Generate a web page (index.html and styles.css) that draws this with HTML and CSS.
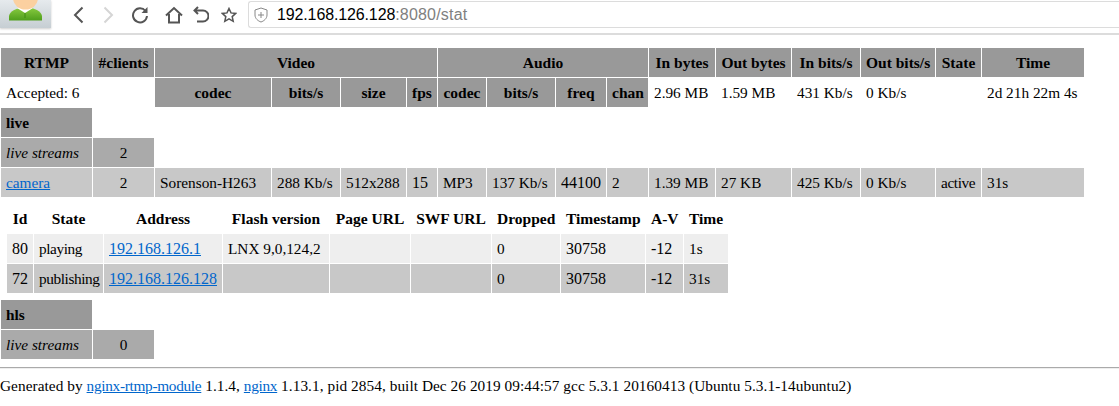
FILE: index.html
```html
<!DOCTYPE html>
<html lang="en">
<head>
<meta charset="utf-8">
<title>RTMP statistics</title>
<link rel="stylesheet" href="styles.css">
</head>
<body>
<header class="toolbar">
  <div class="avatar">
    <svg width="51" height="28" viewBox="0 0 51 28">
      <defs>
        <linearGradient id="bg" x1="0" y1="0" x2="0" y2="1"><stop offset="0" stop-color="#e6eaed"/><stop offset="1" stop-color="#c6ced3"/></linearGradient>
        <linearGradient id="shirt" x1="0" y1="0" x2="0" y2="1"><stop offset="0" stop-color="#86c93f"/><stop offset="1" stop-color="#4f9e1c"/></linearGradient>
      </defs>
      <rect width="51" height="28" fill="url(#bg)"/>
      <path d="M9 20.500v-4c0-4 5-7 10-8.500h13c5 1.500 10 4.500 10 8.500v4z" fill="url(#shirt)"/>
      <path d="M17 8l8 5 8-5-3-1H20z" fill="#fff"/>
      <path d="M25 13v5" stroke="#3f8a14" stroke-width="1"/>
      <ellipse cx="25.500" cy="-2" rx="12.500" ry="11.500" fill="#fbd0a0"/>
    </svg>
  </div>
  <nav class="nav-icons">
    <svg class="icon back" width="11" height="18" viewBox="0 0 11 18"><path d="M9.500 1.500L2 9l7.500 7.500" fill="none" stroke="#555" stroke-width="2"/></svg>
    <svg class="icon forward" width="11" height="18" viewBox="0 0 11 18"><path d="M1.500 1.500L9 9l-7.500 7.500" fill="none" stroke="#d5d5d5" stroke-width="2"/></svg>
    <svg class="icon reload" width="18" height="18" viewBox="0 0 18 18"><path d="M14.500 5A7 7 0 1 0 16 10" fill="none" stroke="#555" stroke-width="2"/><path d="M16.500 1v6h-6z" fill="#555"/></svg>
    <svg class="icon home" width="18" height="18" viewBox="0 0 18 18"><path d="M1 9.500L9 2l8 7.500M4 8v8.500h10V8" fill="none" stroke="#555" stroke-width="2"/></svg>
    <svg class="icon undo" width="16" height="18" viewBox="0 0 16 18"><path d="M5 1L1.500 4.500 5 8M2 4.500h8a5 5 0 0 1 0 11H4" fill="none" stroke="#555" stroke-width="2"/></svg>
    <svg class="icon star" width="16" height="16" viewBox="0 0 16 16"><path d="M8 1.500l2 4.400 4.800.5-3.600 3.200 1 4.700L8 11.900l-4.200 2.400 1-4.700L1.200 6.400 6 5.900z" fill="none" stroke="#555" stroke-width="1.500"/></svg>
  </nav>
  <div class="urlbar">
    <svg class="shield" width="14" height="16" viewBox="0 0 14 16"><path d="M7 1l6 2v5c0 3.500-3 6-6 7-3-1-6-3.500-6-7V3z" fill="none" stroke="#888"/><path d="M7 5v6M4 8h6" stroke="#888"/></svg>
    <span class="host">192.168.126.128</span><span class="rest">:8080/stat</span>
  </div>
</header>

<main class="page">
  <table class="stats">
    <colgroup>
      <col class="c1"><col class="c2"><col class="c3"><col class="c4"><col class="c5"><col class="c6"><col class="c7"><col class="c8"><col class="c9"><col class="c10"><col class="c11"><col class="c12"><col class="c13"><col class="c14"><col class="c15"><col class="c16">
    </colgroup>
    <tr>
      <th>RTMP</th><th>#clients</th><th colspan="4">Video</th><th colspan="4">Audio</th><th>In bytes</th><th>Out bytes</th><th>In bits/s</th><th>Out bits/s</th><th>State</th><th>Time</th>
    </tr>
    <tr>
      <td colspan="2" class="plain">Accepted: 6</td>
      <th>codec</th><th>bits/s</th><th>size</th><th>fps</th><th>codec</th><th>bits/s</th><th>freq</th><th>chan</th>
      <td class="plain">2.96 MB</td><td class="plain">1.59 MB</td><td class="plain">431 Kb/s</td><td class="plain">0 Kb/s</td><td class="plain"></td><td class="plain">2d 21h 22m 4s</td>
    </tr>
    <tr><td class="app"><b>live</b></td><td colspan="15" class="plain"></td></tr>
    <tr><td class="group"><i>live streams</i></td><td class="group center">2</td><td colspan="14" class="plain"></td></tr>
    <tr class="stream">
      <td><a href="#">camera</a></td><td class="center">2</td><td>Sorenson-H263</td><td>288 Kb/s</td><td>512x288</td><td class="num">15</td><td>MP3</td><td>137 Kb/s</td><td class="num">44100</td><td>2</td><td>1.39 MB</td><td>27 KB</td><td>425 Kb/s</td><td>0 Kb/s</td><td class="tight">active</td><td>31s</td>
    </tr>
    <tr>
      <td colspan="16" class="nested">
        <table class="clients">
          <colgroup>
            <col class="k1"><col class="k2"><col class="k3"><col class="k4"><col class="k5"><col class="k6"><col class="k7"><col class="k8"><col class="k9"><col class="k10">
          </colgroup>
          <tr class="head"><th>Id</th><th>State</th><th>Address</th><th>Flash version</th><th>Page URL</th><th>SWF URL</th><th>Dropped</th><th>Timestamp</th><th>A-V</th><th>Time</th></tr>
          <tr class="light"><td class="num">80</td><td class="tight">playing</td><td class="num"><a href="#">192.168.126.1</a></td><td>LNX 9,0,124,2</td><td></td><td></td><td>0</td><td class="num">30758</td><td class="num">-12</td><td>1s</td></tr>
          <tr class="dark"><td class="num">72</td><td class="tight">publishing</td><td class="num"><a href="#">192.168.126.128</a></td><td></td><td></td><td></td><td>0</td><td class="num">30758</td><td class="num">-12</td><td>31s</td></tr>
        </table>
      </td>
    </tr>
    <tr><td class="app"><b>hls</b></td><td colspan="15" class="plain"></td></tr>
    <tr><td class="group"><i>live streams</i></td><td class="group center">0</td><td colspan="14" class="plain"></td></tr>
  </table>
  <hr class="rule">
  <p class="footer">Generated by <a href="#">nginx-rtmp-module</a> 1.1.4, <a href="#">nginx</a> 1.13.1, pid 2854, built Dec 26 2019 09:44:57 gcc 5.3.1 20160413 (Ubuntu 5.3.1-14ubuntu2)</p>
</main>
</body>
</html>
```
FILE: styles.css
```css
* { box-sizing: border-box; }
html, body { margin: 0; padding: 0; background: #fff; }
body { width: 1119px; height: 406px; overflow: hidden; font-family: "Liberation Serif", "Times New Roman", serif; font-size: 15.3px; color: #000; }
a { color: #0066cc; }

.toolbar { display: flex; align-items: flex-start; height: 35px; border-bottom: 2px solid #dcdcdc; }
.avatar { width: 51px; height: 28px; flex: none; box-shadow: 0 1px 2px rgba(0,0,0,.2); }
.avatar svg { display: block; }
.nav-icons { display: flex; align-items: center; margin: 6px 0 0 22px; }
.icon { display: block; }
.forward { margin-left: 19px; }
.reload { margin-left: 17px; }
.home { margin-left: 16px; }
.undo { margin-left: 10px; }
.star { margin-left: 12px; }
.urlbar { flex: 1; display: flex; align-items: center; margin: 1px 0 0 11px; height: 27px; border: 1px solid #dcdcdc; border-right: 0; border-radius: 3px 0 0 3px; padding-left: 5px; font-family: "Liberation Sans", Arial, sans-serif; font-size: 16px; }
.shield { margin-right: 9px; }
.host { color: #000; letter-spacing: -.13px; }
.rest { color: #808080; letter-spacing: .2px; }

.page { padding-top: 12px; }
.stats, .clients { table-layout: fixed; border-collapse: separate; border-spacing: 1px; }
.stats { width: 1085px; }
.clients { width: 723px; }
td, th { height: 29px; padding: 0 5px; white-space: nowrap; }
th { background: #999; text-align: center; font-weight: bold; font-size: 15.5px; }
td { background: #ccc; text-align: left; }
.plain { background: transparent; }
.app { background: #999; }
.group { background: #aaa; }
.center { text-align: center; }
.num { font-size: 16px; }
.tight { letter-spacing: -.4px; }
.stream td { background: #c8c8c8; }
.stats .nested { background: transparent; padding: 5px; height: auto; }
.clients .head th { background: transparent; }
.clients .light td { background: #eee; }
.clients .dark td { background: #c8c8c8; }

.c1 { width: 91px; } .c2 { width: 61px; } .c3 { width: 116px; } .c4 { width: 68px; } .c5 { width: 65px; } .c6 { width: 30px; } .c7 { width: 48px; } .c8 { width: 68px; } .c9 { width: 50px; } .c10 { width: 41px; } .c11 { width: 66px; } .c12 { width: 75px; } .c13 { width: 68px; } .c14 { width: 74px; } .c15 { width: 45px; } .c16 { width: 102px; }
.k1 { width: 26px; } .k2 { width: 69px; } .k3 { width: 118px; } .k4 { width: 106px; } .k5 { width: 80px; } .k6 { width: 80px; } .k7 { width: 68px; } .k8 { width: 84px; } .k9 { width: 37px; } .k10 { width: 44px; }

.rule { margin: 7px 0 0; height: 2px; border: 0; border-top: 1px solid #aaa; border-bottom: 1px solid #eee; }
.footer { margin: 8px 0 0; white-space: nowrap; letter-spacing: .06px; }
.footer a { letter-spacing: -.3px; }
```
